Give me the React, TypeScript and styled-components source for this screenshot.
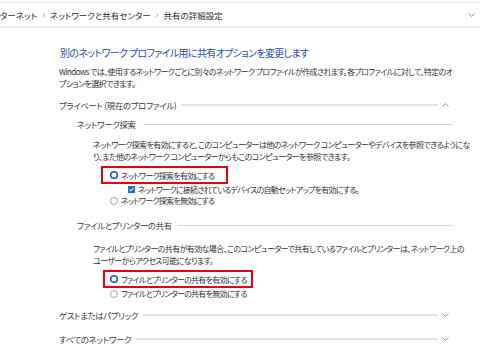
import React from 'react';
import styled, { createGlobalStyle } from 'styled-components';

const GlobalStyle = createGlobalStyle`
  html, body {
    margin: 0;
    padding: 0;
    background: #fff;
  }
  body {
    width: 480px;
    height: 360px;
    overflow: hidden;
    font-family: "Noto Sans CJK JP", "Noto Sans", sans-serif;
    font-feature-settings: "palt";
    color: #333;
  }
`;

const TopBar = styled.div`
  margin-top: 2px;
  height: 23px;
  border-top: 1px solid #e8e8e8;
  border-bottom: 2px solid #efefef;
  display: flex;
  align-items: center;
  font-size: 8.5px;
  color: #2b2b2b;
  white-space: nowrap;
`;

const Crumb = styled.span`
  line-height: 12px;
`;

const Sep = styled.span`
  color: #888;
  margin: 0 5px;
  font-size: 9px;
`;

const BarChevron = styled.span`
  margin-left: auto;
  margin-right: 5px;
  display: flex;
`;

const Main = styled.div`
  padding: 0 27px 0 59px;
  display: flex;
  flex-direction: column;
`;

const Title = styled.h1`
  margin: 18px 0 0 1px;
  font-size: 10px;
  letter-spacing: -0.65px;
  line-height: 14px;
  font-weight: 400;
  color: #2c4ea5;
  white-space: nowrap;
`;

const Text = styled.p<{ $indent?: number; $top?: number }>`
  margin: ${(p) => p.$top ?? 6}px 0 0 ${(p) => p.$indent ?? 0}px;
  font-size: 8px;
  letter-spacing: -0.6px;
  line-height: 12px;
  white-space: nowrap;
`;

const HeaderRow = styled.div<{ $indent?: number; $top: number }>`
  margin: ${(p) => p.$top}px 0 0 ${(p) => p.$indent ?? 0}px;
  height: 12px;
  display: flex;
  align-items: center;
  font-size: 8.4px;
  letter-spacing: -0.3px;
  color: #3a3a3a;
  white-space: nowrap;
`;

const Rule = styled.div<{ $gap: number; $thick?: boolean }>`
  flex: 1;
  margin-left: ${(p) => p.$gap}px;
  height: ${(p) => (p.$thick ? 2 : 1)}px;
  background: ${(p) => (p.$thick ? '#e4e4e4' : '#d8d8d8')};
`;

const ChevronSlot = styled.span`
  width: 15px;
  display: flex;
  justify-content: center;
`;

const Highlight = styled.div<{ $left: number; $width: number; $pad: number; $top: number }>`
  box-sizing: border-box;
  margin: ${(p) => p.$top}px 0 0 ${(p) => p.$left}px;
  width: ${(p) => p.$width}px;
  height: 18px;
  padding-left: ${(p) => p.$pad}px;
  border: 2px solid #e8000b;
  display: flex;
  align-items: center;
`;

const OptionRow = styled.div<{ $left: number }>`
  margin-left: ${(p) => p.$left}px;
  height: 11px;
  display: flex;
  align-items: center;
  gap: 3px;
  font-size: 8px;
  letter-spacing: -0.75px;
  white-space: nowrap;
`;

const Label = styled.span`
  line-height: 11px;
`;

const Chevron = ({ up }: { up?: boolean }) => (
  <svg width="7" height="4" viewBox="0 0 7 4">
    <polyline
      points={up ? '0.5,3.5 3.5,0.5 6.5,3.5' : '0.5,0.5 3.5,3.5 6.5,0.5'}
      fill="none"
      stroke="#8a8a8a"
      strokeWidth="0.9"
    />
  </svg>
);

const Radio = ({ checked }: { checked?: boolean }) => (
  <svg width="8" height="8" viewBox="0 0 8 8">
    {checked ? (
      <>
        <circle cx="4" cy="4" r="3.3" fill="#fff" stroke="#1b5fb0" strokeWidth="1.6" />
        <circle cx="4" cy="4" r="1.1" fill="#fff" />
      </>
    ) : (
      <circle cx="4" cy="4" r="3.5" fill="#fff" stroke="#8c8c8c" strokeWidth="0.8" />
    )}
  </svg>
);

const Checkbox = () => (
  <svg width="7" height="7" viewBox="0 0 7 7">
    <rect x="0" y="0" width="7" height="7" fill="#2a6cc0" />
    <polyline points="1.4,3.6 2.9,5 5.6,1.8" fill="none" stroke="#fff" strokeWidth="1" />
  </svg>
);

export default function App() {
  return (
    <>
      <GlobalStyle />
      <TopBar>
        <Crumb>ターネット</Crumb>
        <Sep>›</Sep>
        <Crumb>ネットワークと共有センター</Crumb>
        <Sep>›</Sep>
        <Crumb>共有の詳細設定</Crumb>
        <BarChevron>
          <Chevron />
        </BarChevron>
      </TopBar>

      <Main>
        <Title>別のネットワーク プロファイル用に共有オプションを変更します</Title>
        <Text>
          Windows では、使用するネットワークごとに別々のネットワーク プロファイルが作成されます。各プロファイルに対して、特定のオ
          <br />
          プションを選択できます。
        </Text>

        <HeaderRow $top={9}>
          プライベート (現在のプロファイル)
          <Rule $gap={5} $thick />
          <ChevronSlot>
            <Chevron up />
          </ChevronSlot>
        </HeaderRow>

        <HeaderRow $top={7} $indent={18}>
          ネットワーク探索
          <Rule $gap={7} />
        </HeaderRow>
        <Text $top={9} $indent={34}>
          ネットワーク探索を有効にすると、このコンピューターは他のネットワーク コンピューターやデバイスを参照できるようにな
          <br />
          り、また他のネットワーク コンピューターからもこのコンピューターを参照できます。
        </Text>
        <Highlight $top={3} $left={42} $width={127} $pad={7}>
          <OptionRow $left={0}>
            <Radio checked />
            <Label>ネットワーク探索を有効にする</Label>
          </OptionRow>
        </Highlight>
        <OptionRow $left={69}>
          <Checkbox />
          <Label>ネットワークに接続されているデバイスの自動セットアップを有効にする。</Label>
        </OptionRow>
        <OptionRow $left={51}>
          <Radio />
          <Label>ネットワーク探索を無効にする</Label>
        </OptionRow>

        <HeaderRow $top={13} $indent={18}>
          ファイルとプリンターの共有
          <Rule $gap={6} />
        </HeaderRow>
        <Text $top={12} $indent={34}>
          ファイルとプリンターの共有が有効な場合、このコンピューターで共有しているファイルとプリンターは、ネットワーク上の
          <br />
          ユーザーからアクセス可能になります。
        </Text>
        <Highlight $top={3} $left={44} $width={150} $pad={5}>
          <OptionRow $left={0}>
            <Radio checked />
            <Label>ファイルとプリンターの共有を有効にする</Label>
          </OptionRow>
        </Highlight>
        <OptionRow $left={51}>
          <Radio />
          <Label>ファイルとプリンターの共有を無効にする</Label>
        </OptionRow>

        <HeaderRow $top={10}>
          ゲストまたはパブリック
          <Rule $gap={5} $thick />
          <ChevronSlot>
            <Chevron />
          </ChevronSlot>
        </HeaderRow>
        <HeaderRow $top={12}>
          すべてのネットワーク
          <Rule $gap={5} $thick />
          <ChevronSlot>
            <Chevron />
          </ChevronSlot>
        </HeaderRow>
      </Main>
    </>
  );
}
